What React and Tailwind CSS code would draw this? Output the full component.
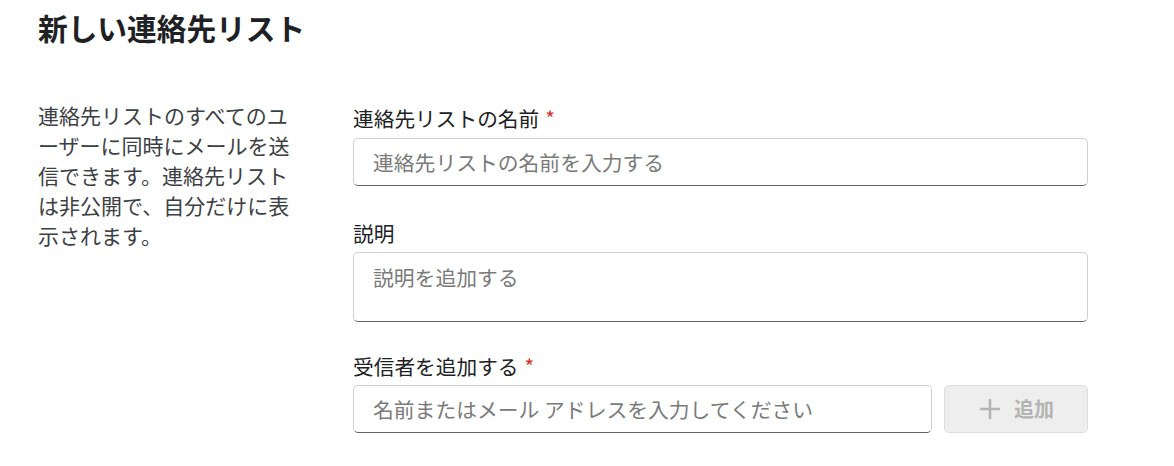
import React from 'react';

const font = { fontFamily: '"Noto Sans CJK JP", "Noto Sans", sans-serif' };

function Label({ children, required }) {
  return (
    <label className="block text-[20.7px] leading-[28px] text-[#202124]">
      {children}
      {required && <span className="ml-[6px] text-[#d93025]">*</span>}
    </label>
  );
}

export default function App() {
  return (
    <div className="w-[1174px] h-[466px] bg-white px-[38px] pt-[10px]" style={font}>
      <h1 className="text-[29.7px] leading-[36px] font-bold text-[#202124]">新しい連絡先リスト</h1>
      <div className="flex mt-[54px]">
        <p className="w-[260px] text-[21px] leading-[30px] text-[#3c4043] shrink-0">
          連絡先リストのすべてのユーザーに同時にメールを送信できます。連絡先リストは非公開で、自分だけに表示されます。
        </p>
        <div className="ml-[55px] w-[735px] pt-[4px]">
          <Label required>連絡先リストの名前</Label>
          <input
            className="mt-[6px] block w-full h-[48px] rounded-[5px] border border-[#d0d0d0] border-b-[#5f6368] px-[19px] text-[20.8px] text-[#202124] placeholder:text-[#7a7a7a] outline-none"
            placeholder="連絡先リストの名前を入力する"
          />
          <div className="mt-[33px]">
            <Label>説明</Label>
          </div>
          <textarea
            className="mt-[5px] block w-full h-[70px] resize-none rounded-[5px] border border-[#d0d0d0] border-b-[#5f6368] px-[19px] pt-[9px] text-[20.8px] leading-[30px] text-[#202124] placeholder:text-[#7a7a7a] outline-none"
            placeholder="説明を追加する"
          />
          <div className="mt-[30px]">
            <Label required>受信者を追加する</Label>
          </div>
          <div className="mt-[5px] flex gap-[12px]">
            <input
              className="flex-1 h-[48px] rounded-[5px] border border-[#d0d0d0] border-b-[#5f6368] px-[19px] text-[20.8px] text-[#202124] placeholder:text-[#7a7a7a] outline-none"
              placeholder="名前またはメール アドレスを入力してください"
            />
            <button
              disabled
              className="w-[144px] h-[48px] rounded-[5px] border border-[#dedede] bg-[#eeeeee] flex items-center justify-center gap-[12px] text-[#b3b3b3] text-[20px] font-bold"
            >
              <svg width="24" height="24" viewBox="0 0 24 24" fill="none" stroke="#b3b3b3" strokeWidth="2.5">
                <path d="M12 2v20M2 12h20" />
              </svg>
              <span>追加</span>
            </button>
          </div>
        </div>
      </div>
    </div>
  );
}
